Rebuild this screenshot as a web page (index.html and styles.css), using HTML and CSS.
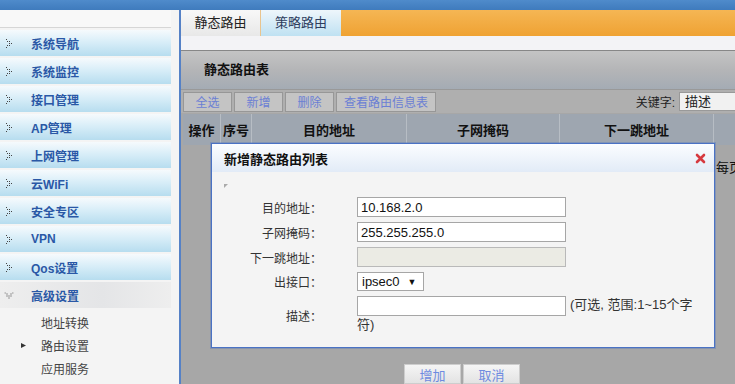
FILE: index.html
```html
<!DOCTYPE html>
<html lang="zh-CN">
  <head>
    <meta charset="UTF-8" />
    <title>静态路由</title>
    <link rel="stylesheet" href="styles.css">
  </head>
  <body>
    <div class="topbar"></div>

    <div class="layout">
      <!-- 左侧菜单 -->
      <aside class="sidebar">
        <div class="side-head"></div>
        <ul class="menu">
          <li class="menu-item"><svg class="dots" width="8" height="9" viewBox="0 0 8 9"><path d="M1 0h1v1H1zM2 2h1v1H2zM4 2h1v1H4zM4 4h1v1H4zM6 4h1v1H6zM2 6h1v1H2zM4 6h1v1H4zM1 8h1v1H1z" fill="#444"/></svg>系统导航</li>
          <li class="menu-item"><svg class="dots" width="8" height="9" viewBox="0 0 8 9"><path d="M1 0h1v1H1zM2 2h1v1H2zM4 2h1v1H4zM4 4h1v1H4zM6 4h1v1H6zM2 6h1v1H2zM4 6h1v1H4zM1 8h1v1H1z" fill="#444"/></svg>系统监控</li>
          <li class="menu-item"><svg class="dots" width="8" height="9" viewBox="0 0 8 9"><path d="M1 0h1v1H1zM2 2h1v1H2zM4 2h1v1H4zM4 4h1v1H4zM6 4h1v1H6zM2 6h1v1H2zM4 6h1v1H4zM1 8h1v1H1z" fill="#444"/></svg>接口管理</li>
          <li class="menu-item"><svg class="dots" width="8" height="9" viewBox="0 0 8 9"><path d="M1 0h1v1H1zM2 2h1v1H2zM4 2h1v1H4zM4 4h1v1H4zM6 4h1v1H6zM2 6h1v1H2zM4 6h1v1H4zM1 8h1v1H1z" fill="#444"/></svg>AP管理</li>
          <li class="menu-item"><svg class="dots" width="8" height="9" viewBox="0 0 8 9"><path d="M1 0h1v1H1zM2 2h1v1H2zM4 2h1v1H4zM4 4h1v1H4zM6 4h1v1H6zM2 6h1v1H2zM4 6h1v1H4zM1 8h1v1H1z" fill="#444"/></svg>上网管理</li>
          <li class="menu-item"><svg class="dots" width="8" height="9" viewBox="0 0 8 9"><path d="M1 0h1v1H1zM2 2h1v1H2zM4 2h1v1H4zM4 4h1v1H4zM6 4h1v1H6zM2 6h1v1H2zM4 6h1v1H4zM1 8h1v1H1z" fill="#444"/></svg>云WiFi</li>
          <li class="menu-item"><svg class="dots" width="8" height="9" viewBox="0 0 8 9"><path d="M1 0h1v1H1zM2 2h1v1H2zM4 2h1v1H4zM4 4h1v1H4zM6 4h1v1H6zM2 6h1v1H2zM4 6h1v1H4zM1 8h1v1H1z" fill="#444"/></svg>安全专区</li>
          <li class="menu-item"><svg class="dots" width="8" height="9" viewBox="0 0 8 9"><path d="M1 0h1v1H1zM2 2h1v1H2zM4 2h1v1H4zM4 4h1v1H4zM6 4h1v1H6zM2 6h1v1H2zM4 6h1v1H4zM1 8h1v1H1z" fill="#444"/></svg>VPN</li>
          <li class="menu-item"><svg class="dots" width="8" height="9" viewBox="0 0 8 9"><path d="M1 0h1v1H1zM2 2h1v1H2zM4 2h1v1H4zM4 4h1v1H4zM6 4h1v1H6zM2 6h1v1H2zM4 6h1v1H4zM1 8h1v1H1z" fill="#444"/></svg>Qos设置</li>
          <li class="menu-item open"><svg class="dots" width="8" height="9" viewBox="0 0 8 9"><path d="M1 0h1v1H1zM2 2h1v1H2zM4 2h1v1H4zM4 4h1v1H4zM6 4h1v1H6zM2 6h1v1H2zM4 6h1v1H4zM1 8h1v1H1z" fill="#444"/></svg>高级设置</li>
        </ul>
        <ul class="submenu">
          <li><span class="mark"></span>地址转换</li>
          <li class="current"><span class="mark"><svg width="5" height="5" viewBox="0 0 5 5"><path d="M0 0L5 2.5L0 5z" fill="#333"/></svg></span>路由设置</li>
          <li><span class="mark"></span>应用服务</li>
        </ul>
      </aside>

      <!-- 主内容 -->
      <main class="main">
        <div class="tabs">
          <a class="tab active">静态路由</a>
          <a class="tab">策略路由</a>
        </div>
        <div class="spacer"></div>

        <div class="panel-title">静态路由表</div>
        <div class="toolbar">
          <button class="tool-btn">全选</button>
          <button class="tool-btn">新增</button>
          <button class="tool-btn">删除</button>
          <button class="tool-btn wide">查看路由信息表</button>
          <div class="search">
            <span>关键字:</span>
            <span class="kw-select">描述</span>
          </div>
        </div>

        <div class="thead">
          <div class="th c-op">操作</div>
          <div class="th c-no">序号</div>
          <div class="th c-dst">目的地址</div>
          <div class="th c-mask">子网掩码</div>
          <div class="th c-hop">下一跳地址</div>
          <div class="th c-rest"></div>
        </div>
        <div class="pager">每页</div>

        <div class="actions">
          <button class="act-btn">增加</button>
          <button class="act-btn">取消</button>
        </div>

        <!-- 弹出框 -->
        <div class="dialog">
          <div class="dialog-title">
            <span>新增静态路由列表</span>
            <svg class="close" width="11" height="11" viewBox="0 0 11 11"><path d="M2 2l7 7M9 2l-7 7" stroke="#d63a40" stroke-width="2.6" stroke-linecap="round"/></svg>
          </div>
          <div class="dialog-body">
            <svg class="corner" width="4" height="4" viewBox="0 0 4 4"><path d="M0 0H4L0 4z" fill="#aaa"/></svg>
            <div class="form">
              <label class="f-label">目的地址：</label>
              <div class="f-value"><input class="f-input" type="text" value="10.168.2.0"></div>

              <label class="f-label">子网掩码：</label>
              <div class="f-value"><input class="f-input" type="text" value="255.255.255.0"></div>

              <label class="f-label">下一跳地址：</label>
              <div class="f-value"><input class="f-input" type="text" disabled></div>

              <label class="f-label">出接口：</label>
              <div class="f-value"><span class="f-select">ipsec0</span></div>

              <label class="f-label">描述：</label>
              <div class="f-value"><input class="f-input" type="text"><span class="note">(可选, 范围:1~15个字符)</span></div>
            </div>
          </div>
        </div>
      </main>
    </div>
  </body>
</html>
```

FILE: styles.css
```css
* {
  box-sizing: border-box;
}

body {
  margin: 0;
  height: 384px;
  overflow: hidden;
  font: 12px "Liberation Sans", "Noto Sans CJK SC", sans-serif;
  color: #222;
  background: #f4f4f4;
}

.topbar {
  height: 10px;
  background: linear-gradient(#4f8bcb, #3f7bbd);
}

.layout {
  display: flex;
  height: 374px;
}

/* Меню зліва */
.sidebar {
  width: 181px;
  flex: none;
  background: #f4f4f4;
  border-right: 2px solid #5581c6;
}
.side-head {
  width: 171px;
  height: 18px;
  background: #f8f8f8;
  border-bottom: 1px solid #d6d6d6;
  margin-bottom: 2px;
}
.menu,
.submenu {
  list-style: none;
  margin: 0;
  padding: 0;
}
.menu-item {
  width: 171px;
  height: 26px;
  margin-bottom: 2px;
  display: flex;
  align-items: center;
  padding-left: 5px;
  background: linear-gradient(#f6fafd, #d9eef8 45%, #b7ddef);
  color: #2a58a6;
  font-weight: 700;
  font-size: 12px;
}
.menu-item .dots {
  margin-right: 18px;
}
.menu-item.open {
  background: linear-gradient(90deg, #eeeeee, #e4e5e7 60%, #eeeeee);
}
.menu-item.open .dots {
  transform: rotate(90deg);
}
.submenu {
  padding-top: 1px;
}
.submenu li {
  height: 23px;
  display: flex;
  align-items: center;
  padding-left: 21px;
  color: #444;
}
.submenu .mark {
  width: 20px;
  display: flex;
  align-items: center;
}

/* Основна частина */
.main {
  flex: 1;
  min-width: 0;
  position: relative;
  display: flex;
  flex-direction: column;
  background: #a7a7a7;
  overflow: hidden;
}

.tabs {
  height: 26px;
  display: flex;
  background: linear-gradient(#f5b654, #efa233);
}
.tab {
  width: 80px;
  text-align: center;
  line-height: 26px;
  font-size: 13px;
  color: #2e3d5e;
  background: linear-gradient(#eef6fb, #bfe1f2);
}
.tab.active {
  color: #222;
  background: linear-gradient(#f8f8f8, #e8e8e8);
  border-right: 1px solid #e9c48e;
}

.spacer {
  height: 16px;
  background: #f3f3f6;
}

.panel-title {
  height: 40px;
  border-top: 1px solid #878787;
  border-bottom: 1px solid #999;
  background: linear-gradient(#c4c4c4, #b4b5b7 50%, #a4abb4);
  padding-left: 23px;
  line-height: 38px;
  font-size: 13px;
  font-weight: 700;
  color: #111;
}

.toolbar {
  height: 25px;
  display: flex;
  align-items: center;
  gap: 2px;
  padding-left: 2px;
  background: #afafaf;
}
.tool-btn {
  width: 49px;
  height: 20px;
  padding: 0;
  border: 1px solid #979797;
  background: #c4c4c4;
  color: #6b7fd4;
  font: inherit;
}
.tool-btn.wide {
  width: 100px;
}
.search {
  margin-left: auto;
  margin-right: -4px;
  display: flex;
  align-items: center;
  gap: 4px;
  color: #222;
}
.kw-select {
  width: 60px;
  height: 19px;
  line-height: 17px;
  padding-left: 5px;
  border: 1px solid #999;
  background: #f1f1f1;
  font-size: 13px;
}

.thead {
  height: 31px;
  margin: 1px 0 0 2px;
  display: flex;
  background: #9ea6b0;
}
.th {
  flex: none;
  border-right: 1px solid #b7bdc4;
  text-align: center;
  padding-top: 3px;
  line-height: 28px;
  font-size: 13px;
  font-weight: 700;
  color: #111;
}
.c-op { width: 38px; }
.c-no { width: 31px; }
.c-dst { width: 155px; }
.c-mask { width: 153px; }
.c-hop { width: 154px; }
.c-rest { flex: 1; border-right: none; }

.pager {
  margin-top: 13px;
  padding-left: 535px;
  line-height: 20px;
  white-space: nowrap;
  font-size: 13px;
  color: #111;
}

.actions {
  margin-top: 186px;
  display: flex;
  justify-content: center;
  gap: 2px;
  padding-left: 8px;
}
.act-btn {
  width: 57px;
  height: 20px;
  padding: 0;
  border: 1px solid #cdcdcd;
  background: linear-gradient(#f5f5f5, #e3e3e3);
  color: #6e8be0;
  font: inherit;
  font-size: 13px;
}

/* Діалог */
.dialog {
  position: absolute;
  left: 30px;
  top: 133px;
  width: 504px;
  height: 205px;
  border: 1px solid #4a72c4;
  box-shadow: 0 0 0 1px rgba(74, 114, 196, 0.35);
  background: #f4f4f4;
  display: flex;
  flex-direction: column;
}
.dialog-title {
  height: 28px;
  flex: none;
  display: flex;
  align-items: center;
  justify-content: space-between;
  padding: 0 8px 0 12px;
  background: linear-gradient(#fbfdff, #e2ebf7);
  font-size: 13px;
  font-weight: 700;
  color: #111;
}
.dialog-body {
  padding: 12px 0 0 12px;
}
.corner {
  display: block;
}
.form {
  margin-top: 9px;
  display: grid;
  grid-template-columns: 98px 344px;
  column-gap: 35px;
  row-gap: 5px;
  align-items: center;
}
.f-label {
  text-align: right;
  color: #333;
}
.f-value {
  line-height: 18px;
  font-size: 13px;
}
.f-input {
  width: 209px;
  height: 20px;
  margin: 0 4px 0 0;
  padding: 0 3px;
  border: 1px solid #a6a6a6;
  background: #fff;
  font: inherit;
  color: #111;
  vertical-align: middle;
}
.f-input:disabled {
  background: #ebebe4;
  border-color: #b9b9b9;
}
.f-select {
  display: inline-flex;
  align-items: center;
  width: 67px;
  height: 19px;
  padding-left: 4px;
  border: 1px solid #a6a6a6;
  background: #fff;
  color: #111;
}
.f-select::after {
  content: "▼";
  margin-left: 8px;
  font-size: 9px;
}
.note {
  color: #333;
}
```
